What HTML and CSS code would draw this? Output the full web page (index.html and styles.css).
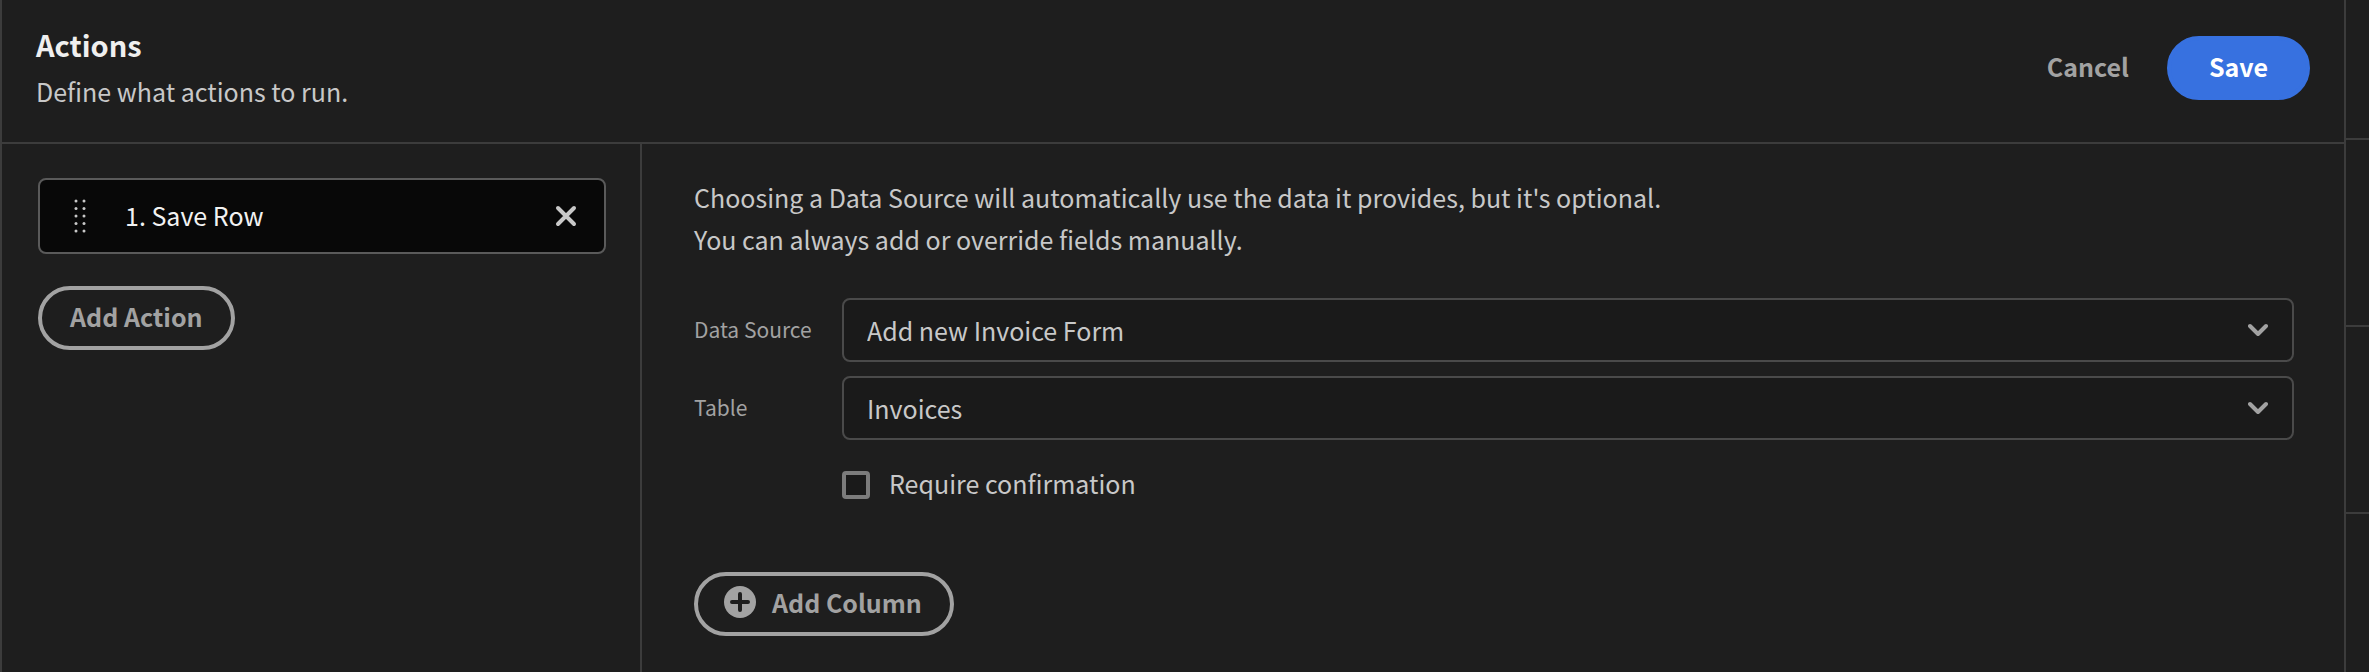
FILE: index.html
```html
<!DOCTYPE html>
<html lang="en">
<head>
    <meta charset="UTF-8">
    <meta name="viewport" content="width=device-width, initial-scale=1.0">
    <title>Actions</title>
    <link rel="stylesheet" href="styles.css">
</head>
<body>
    <div class="drawer">
        <header class="drawer-header">
            <div class="heading">
                <h1>Actions</h1>
                <p>Define what actions to run.</p>
            </div>
            <div class="buttons">
                <button type="button" class="btn btn-quiet">Cancel</button>
                <button type="button" class="btn btn-cta">Save</button>
            </div>
        </header>

        <div class="drawer-body">
            <!-- Action list -->
            <aside class="action-list">
                <div class="action-item">
                    <svg class="handle" width="12" height="34" viewBox="0 0 12 34" fill="currentColor" aria-hidden="true">
                        <circle cx="2" cy="2" r="1.5"/><circle cx="10" cy="2" r="1.5"/>
                        <circle cx="2" cy="9.5" r="1.5"/><circle cx="10" cy="9.5" r="1.5"/>
                        <circle cx="2" cy="17" r="1.5"/><circle cx="10" cy="17" r="1.5"/>
                        <circle cx="2" cy="24.5" r="1.5"/><circle cx="10" cy="24.5" r="1.5"/>
                        <circle cx="2" cy="32" r="1.5"/><circle cx="10" cy="32" r="1.5"/>
                    </svg>
                    <span class="action-name">1. Save Row</span>
                    <button type="button" class="remove" aria-label="Remove action">
                        <svg width="22" height="22" viewBox="0 0 22 22" fill="none" stroke="currentColor" stroke-width="4" stroke-linecap="round">
                            <path d="M3 3l16 16M19 3L3 19"/>
                        </svg>
                    </button>
                </div>
                <button type="button" class="btn btn-outline">Add Action</button>
            </aside>

            <!-- Settings of the selected action -->
            <main class="settings">
                <p class="intro">Choosing a Data Source will automatically use the data it provides, but it's optional.<br>You can always add or override fields manually.</p>

                <div class="fields">
                    <label for="data-source">Data Source</label>
                    <div class="picker">
                        <select id="data-source">
                            <option>Add new Invoice Form</option>
                        </select>
                        <svg class="chevron" width="20" height="14" viewBox="0 0 20 14" fill="none" stroke="currentColor" stroke-width="4" stroke-linecap="round" stroke-linejoin="round">
                            <path d="M2 3l8 8 8-8"/>
                        </svg>
                    </div>

                    <label for="table">Table</label>
                    <div class="picker">
                        <select id="table">
                            <option>Invoices</option>
                        </select>
                        <svg class="chevron" width="20" height="14" viewBox="0 0 20 14" fill="none" stroke="currentColor" stroke-width="4" stroke-linecap="round" stroke-linejoin="round">
                            <path d="M2 3l8 8 8-8"/>
                        </svg>
                    </div>

                    <label class="checkbox">
                        <input type="checkbox">
                        <span>Require confirmation</span>
                    </label>
                </div>

                <button type="button" class="btn btn-outline btn-icon">
                    <svg width="32" height="32" viewBox="0 0 32 32" aria-hidden="true">
                        <circle cx="16" cy="16" r="16" fill="currentColor"/>
                        <path d="M16 8v16M8 16h16" stroke="#1e1e1e" stroke-width="4" stroke-linecap="round"/>
                    </svg>
                    Add Column
                </button>
            </main>
        </div>
    </div>

    <!-- Edge of the panel behind the drawer -->
    <div class="side-panel">
        <div class="side-section side-top"></div>
        <div class="side-section"></div>
        <div class="side-section"></div>
    </div>
</body>
</html>
```

FILE: styles.css
```css
* {
    margin: 0;
    padding: 0;
    box-sizing: border-box;
}

body {
    display: flex;
    min-height: 100vh;
    background: #1e1e1e;
    color: #c8c8c8;
    font-family: "Noto Sans CJK SC", "Noto Sans", sans-serif;
    font-size: 25px;
    font-weight: 400;
    line-height: 42px;
}

button,
select {
    font: inherit;
    color: inherit;
}

.drawer {
    flex: 1;
    display: flex;
    flex-direction: column;
    border-left: 2px solid #3c3c3c;
    border-right: 2px solid #3c3c3c;
}

.drawer-header {
    display: flex;
    justify-content: space-between;
    align-items: flex-start;
    padding: 20px 34px 30px;
    border-bottom: 2px solid #3c3c3c;
}

.heading h1 {
    padding-bottom: 2px;
    font-size: 29px;
    font-weight: 700;
    line-height: 48px;
    color: #efefef;
}

.buttons {
    display: flex;
    gap: 4px;
    padding-top: 16px;
}

.btn {
    height: 64px;
    padding: 0 28px 4px;
    border: 4px solid transparent;
    border-radius: 32px;
    background: transparent;
    color: #a2a2a2;
    font-weight: 700;
    line-height: 36px;
    cursor: pointer;
}

.btn-quiet {
    padding: 0 30px 4px;
}

.btn-cta {
    padding: 0 38px 4px;
    background: #3771e0;
    border-color: #3771e0;
    color: #fff;
}

.btn-outline {
    border-color: #a2a2a2;
}

.btn-icon {
    display: flex;
    align-items: center;
    gap: 16px;
    padding: 0 28px 4px 26px;
}

.drawer-body {
    flex: 1;
    display: flex;
}

.action-list {
    display: flex;
    flex-direction: column;
    align-items: flex-start;
    gap: 32px;
    width: 640px;
    padding: 34px 34px 34px 36px;
    border-right: 2px solid #3c3c3c;
}

.action-item {
    display: flex;
    align-items: center;
    width: 100%;
    height: 76px;
    padding: 0 27px 0 34px;
    border: 2px solid #5a5a5a;
    border-radius: 8px;
    background: #080808;
    color: #f2f2f2;
}

.handle {
    color: #c8c8c8;
}

.action-name {
    flex: 1;
    padding: 0 0 2px 39px;
}

.remove {
    display: flex;
    border: none;
    background: none;
    color: #c8c8c8;
    cursor: pointer;
}

.settings {
    flex: 1;
    display: flex;
    flex-direction: column;
    align-items: flex-start;
    padding: 32px 50px 32px 52px;
}

.fields {
    display: grid;
    grid-template-columns: 120px 1fr;
    align-items: center;
    gap: 14px 28px;
    width: 100%;
    margin: 38px 0 64px;
}

.fields label {
    padding-bottom: 2px;
    color: #a2a2a2;
    font-size: 21px;
    white-space: nowrap;
}

.picker {
    position: relative;
}

.picker select {
    appearance: none;
    display: block;
    width: 100%;
    height: 64px;
    padding: 0 64px 0 23px;
    border: 2px solid #4a4a4a;
    border-radius: 8px;
    background: #1a1a1a;
}

.chevron {
    position: absolute;
    top: 25px;
    right: 26px;
    color: #a2a2a2;
    pointer-events: none;
}

.fields .checkbox {
    grid-column: 2;
    display: flex;
    align-items: center;
    gap: 19px;
    margin-top: 8px;
    padding: 0;
    color: #c8c8c8;
    font-size: 25px;
}

.checkbox input {
    appearance: none;
    width: 28px;
    height: 28px;
    border: 4px solid #7c7c7c;
    border-radius: 4px;
    background: #1a1a1a;
}

.checkbox span {
    padding-bottom: 4px;
}

.side-panel {
    width: 23px;
}

.side-section {
    height: 187px;
    border-bottom: 2px solid #3c3c3c;
}

.side-top {
    height: 140px;
}
```
